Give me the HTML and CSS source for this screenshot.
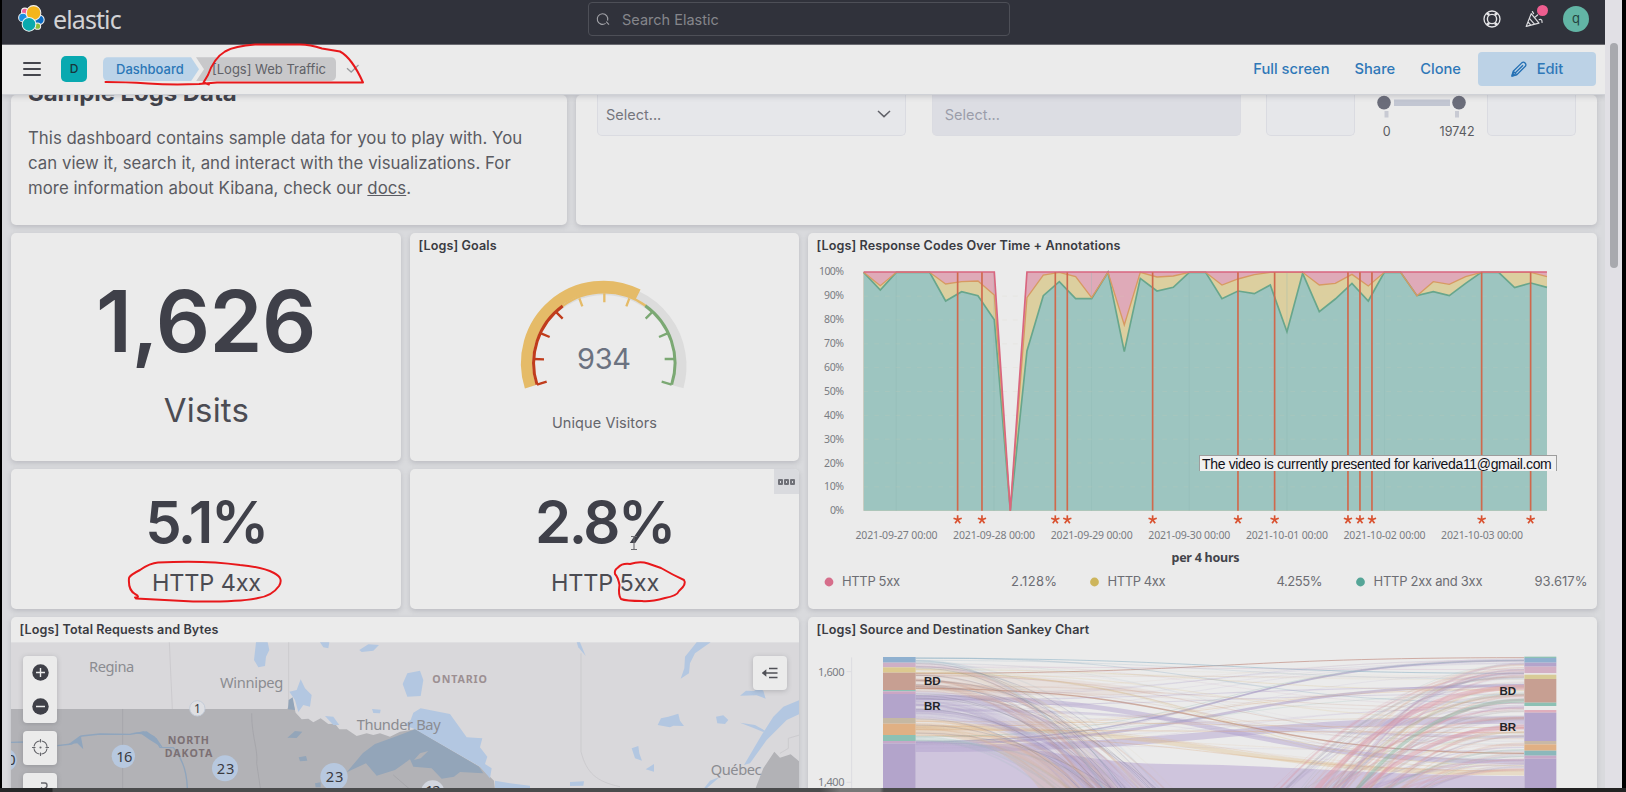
FILE: index.html
```html
<!DOCTYPE html>
<html lang="en">
<head>
<meta charset="utf-8">
<title>[Logs] Web Traffic - Elastic</title>
<link rel="stylesheet" href="styles.css">
</head>
<body>
<div class="window">
  <div class="app">
    <header class="topbar">
      <div class="brand">
        <svg class="logo" viewBox="0 0 26 26">
          <g stroke="#f3f3f3" stroke-width="1">
            <circle cx="6.6" cy="6.2" r="3.2" fill="#ee5f97"/>
            <circle cx="4.8" cy="12.2" r="4.2" fill="#1b8fe0"/>
            <circle cx="20.6" cy="14.2" r="4.6" fill="#0b6cc4"/>
            <circle cx="18.8" cy="20.4" r="3" fill="#8dbd3a"/>
            <circle cx="15" cy="7.6" r="7" fill="#f4b51c"/>
            <circle cx="10.6" cy="18.6" r="6.6" fill="#0aa9ae"/>
          </g>
        </svg>
        <span class="wordmark">elastic</span>
      </div>
      <div class="search">
        <svg viewBox="0 0 14 14"><path d="M9.6 11.4A5.3 5.3 0 1 1 11.6 8.6M10.2 9.6L13 12.6" fill="none" stroke="#a2a3a8" stroke-width="1.1"/></svg>
        <span>Search Elastic</span>
      </div>
      <div class="top-icons">
        <svg class="help" viewBox="0 0 18 18" fill="none" stroke="#e6e6e8">
          <circle cx="9" cy="9" r="8" stroke-width="1.3"/><circle cx="9" cy="9" r="4.6" stroke-width="1.4"/>
          <path d="M3.7 2.9L6.2 5M14.3 2.9L11.8 5M3.7 15.1L6.2 13M14.3 15.1L11.8 13" stroke-width="2.6"/>
        </svg>
        <span class="news">
          <svg viewBox="0 0 20 18" fill="none" stroke="#dddde0" stroke-width="1.2" stroke-linejoin="round" stroke-linecap="round">
            <path d="M6.2 3.6L1.2 16.4L14 13.2ZM4.4 8.4L9.4 14.2M3 12L5.8 15.1M7.4 1.6L8.6 3.6M9.4 7.6L12.6 5M14.2 9.6Q17.4 8.6 17 12.4"/>
          </svg>
          <i></i>
        </span>
        <span class="avatar">q</span>
      </div>
    </header>
    <nav class="navbar">
      <span class="menu"><i></i><i></i><i></i></span>
      <span class="space">D</span>
      <div class="crumbs"><span class="crumb first">Dashboard</span><span class="crumb last">[Logs] Web Traffic</span></div>
      <svg class="check" viewBox="0 0 14 10"><path d="M1 4.2L5.2 8L12.5 1" fill="none" stroke="#9a9a9d" stroke-width="1.3"/></svg>
      <div class="actions">
        <a>Full screen</a><a>Share</a><a>Clone</a>
        <span class="edit">
          <svg viewBox="0 0 16 16" fill="none" stroke="#2470b4" stroke-width="1.3" stroke-linejoin="round"><path d="M1 15L2.2 10.2L11 1.6Q12.6.6 14 2T14.6 5L5.8 13.8ZM4.2 12L12 4.2M2.2 10.2L5.8 13.8"/><path d="M1 15L1.7 12.2L3.8 14.2Z" fill="#2470b4"/></svg>
          Edit
        </span>
      </div>
    </nav>
    <main class="board">
      <section class="row intro">
        <article class="panel about">
          <h2>Sample Logs Data</h2>
          <p>This dashboard contains sample data for you to play with. You<br>can view it, search it, and interact with the visualizations. For<br>more information about Kibana, check our <u>docs</u>.</p>
        </article>
        <article class="panel controls">
          <div class="field select"><span>Select...</span><svg viewBox="0 0 14 8"><path d="M1 1L7 6.6L13 1" fill="none" stroke="#606168" stroke-width="1.5"/></svg></div>
          <div class="field disabled"><span>Select...</span></div>
          <div class="field number lo"></div>
          <svg class="range" viewBox="0 0 100 45">
            <rect x="18" y="4.5" width="56" height="6.5" fill="#c2c6d2"/>
            <path d="M10.5 16v6.5M81 16v6.5" stroke="#c8cad3" stroke-width="4"/>
            <circle cx="8" cy="7.6" r="6.8" fill="#6b6d7a"/><circle cx="83" cy="7.6" r="6.8" fill="#6b6d7a"/>
            <text x="6.8" y="40.5" textLength="7.6">0</text><text x="63.5" y="40.5" textLength="35">19742</text>
          </svg>
          <div class="field number"></div>
        </article>
      </section>
      <section class="row middle">
        <div class="metrics">
          <article class="panel metric big"><strong>1,626</strong><span>Visits</span></article>
          <article class="panel goals">
            <h3>[Logs] Goals</h3>
            <svg class="gauge" viewBox="410 233 389 228">
              <g transform="translate(400 225) scale(.33333)" fill="none">
                <path d="M391 485A230 230 0 1 1 834 485" stroke="#dcdcdc" stroke-width="34"/>
                <path d="M391 485A230 230 0 0 1 714 209" stroke="#e5bb68" stroke-width="34"/>
                <path d="M485 245A212 212 0 0 1 738 243" stroke="#e5bb68" stroke-width="7"/>
                <path d="M538 220l9 24M613 205v27M688 220l-9 24" stroke="#e5bb68" stroke-width="7"/>
                <path d="M411 479A212 212 0 0 1 488 243" stroke="#c03c1c" stroke-width="9"/>
                <path d="M411 479l29-9M401 402l31 1M423 325l26 11M467 260l21 21" stroke="#c03c1c" stroke-width="7"/>
                <path d="M736 242A212 212 0 0 1 815 479" stroke="#7ba873" stroke-width="9"/>
                <path d="M815 479l-30-9M824 402h-30M802 325l-25 11M758 260l-21 21" stroke="#7ba873" stroke-width="7"/>
              </g>
              <text class="gauge-value" x="577" y="368.5" textLength="54">934</text>
              <text class="gauge-label" x="552" y="428" textLength="105">Unique Visitors</text>
            </svg>
          </article>
          <article class="panel metric"><strong>5.1%</strong><span>HTTP 4xx</span></article>
          <article class="panel metric"><strong>2.8%</strong><span>HTTP 5xx</span><em class="options"><i></i><i></i><i></i></em></article>
        </div>
        <article class="panel codes">
          <h3>[Logs] Response Codes Over Time + Annotations</h3>
          <svg class="fill" viewBox="808 233 789 375.5" id="codes"></svg>
        </article>
      </section>
      <section class="row bottom">
        <article class="panel map">
          <h3>[Logs] Total Requests and Bytes</h3>
          <svg class="fill" viewBox="11 617 788 171" preserveAspectRatio="xMidYMin slice">
            <g transform="translate(0 610) scale(.33333)">
              <rect x="33" y="97" width="2366" height="450" fill="#d9d8db"/>
              <path d="M508 97L517 297M866 97V297M1743 130V425C1760 490 1790 515 1860 530M2340 430L2365 415V385L2399 375" fill="none" stroke="#c9c8cb" stroke-width="2.5"/>
              <path d="M33 297H862L876 265L887 308L905 328L925 326L940 337L962 325L985 342L1005 341L1018 358L1040 358L1070 378L1100 370L1120 375L1140 370L1170 380L1200 365L1245 358L1440 470L1482 512L1486 547H33Z" fill="#b2b2b6"/>
              <path d="M2262 547L2290 475L2323 425L2340 443L2372 433L2399 455V547Z" fill="#b2b2b6"/>
              <path d="M368 297V547M755 310C755 380 775 420 770 460L783 547M1180 495L1240 547" fill="none" stroke="#a3a4a8" stroke-width="2.5"/>
              <g fill="#b3c7e1">
                <path d="M768 97H803L808 120L798 140L795 168L775 172L762 150Z"/>
                <path d="M960 97H988L985 115L970 112Z"/><path d="M1078 120L1105 103L1137 105L1120 122L1085 126Z"/>
                <path d="M868 245L890 240L902 208L915 235L935 255L930 290L910 285L895 306L885 270Z"/>
                <path d="M1208 222L1222 190L1260 182L1270 210L1262 258L1222 260Z"/>
                <path d="M1116 297L1142 299L1140 310L1120 309Z"/>
                <path d="M975 318L1000 320L1018 345L1000 345Z"/>
                <path d="M1213 345L1232 330L1240 308L1262 295L1300 302L1350 312L1370 340L1400 382L1447 385L1440 412L1462 440L1455 462L1475 475L1470 505L1440 470L1245 358Z"/>
                <path d="M1485 512L1530 520L1590 527V535H1485Z"/><path d="M1710 516L1752 514L1750 527L1710 528Z"/>
                <path d="M1730 97H1740L1757 138L1735 112Z"/>
                <path d="M2090 97H2132L2085 130L2070 160L2067 190L2042 206L2053 175L2055 140Z"/>
                <path d="M2220 257L2238 242L2262 243L2276 233L2290 242L2297 266L2270 256Z"/>
                <path d="M1973 345L1983 325L2005 320L2035 311L2040 332L2052 348L2020 347L2010 352Z"/>
                <path d="M2148 320L2170 316L2185 330L2175 342L2152 340Z"/>
                <path d="M1895 415L1915 408L1918 430L1926 452L1905 445Z"/><path d="M1937 478L1962 462V485Z"/>
                <path d="M2232 465L2285 375L2320 320L2350 290L2399 270V312L2360 330L2300 390L2250 460Z"/>
                <path d="M2220 338L2265 345L2295 362L2290 366L2255 352ZM2130 512L2160 500L2120 535H2112Z"/>
              </g>
              <g fill="#93a5b9">
                <path d="M1040 487L1088 430L1125 402L1185 380L1245 358L1437 470L1450 490L1380 486L1362 500L1325 506L1295 475L1240 470L1230 448L1185 480L1130 497L1098 460Z"/>
                <path d="M862 383L885 363L907 365L890 384ZM896 442L918 438L922 452L900 454ZM866 270L878 262L885 300L864 298ZM945 520L962 517V532H947Z"/>
              </g>
              <path d="M33 397L80 396M172 407L215 402L245 378L300 372L390 373L430 366L462 380L480 412L520 413Q560 460 562 535" fill="none" stroke="#8fa5bd" stroke-width="4"/>
              <path d="M205 403L242 376L250 418L232 400ZM390 370L440 364L470 385L490 415L450 390L425 373Z" fill="#8fa5bd"/>
              <path d="M1242 450L1260 430L1285 423L1262 445Z" fill="#b2b2b6"/>
              <g fill="#b7c8df">
                <circle cx="370" cy="439" r="35"/><circle cx="675" cy="475" r="39"/><circle cx="1002" cy="500" r="41"/><circle cx="592" cy="295" r="23" fill="#dedfe3" stroke="#c4ccd8" stroke-width="3"/><circle cx="1298" cy="546" r="35" fill="#d2d6df"/><path d="M33 420A35 35 0 0 1 33 480Z"/>
              </g>
              <g class="map-num">
                <text x="349" y="456" textLength="48">16</text><text x="650" y="491" textLength="53">23</text><text x="977" y="516" textLength="53">23</text><text x="582" y="308" font-size="36">1</text><text x="1276" y="557" textLength="46">12</text><text x="22" y="466">0</text>
              </g>
              <g class="map-city">
                <text x="267" y="185" textLength="136">Regina</text><text x="660" y="234" textLength="190">Winnipeg</text><text x="1070" y="361" textLength="252">Thunder Bay</text><text x="2132" y="494" textLength="153">Québec</text>
              </g>
              <g class="map-state">
                <text x="503" y="402" textLength="124">NORTH</text><text x="494" y="440" textLength="143">DAKOTA</text><text x="1297" y="219" textLength="164" fill="#9c8f92">ONTARIO</text>
              </g>
            </g>
          </svg>
          <div class="map-tools">
            <div class="zoom">
              <svg viewBox="0 0 17 17"><circle cx="8.5" cy="8.5" r="8.2" fill="#3f4048"/><path d="M4 8.5h9M8.5 4v9" stroke="#ececec" stroke-width="1.4"/></svg>
              <svg viewBox="0 0 17 17"><circle cx="8.5" cy="8.5" r="8.2" fill="#3f4048"/><path d="M4 8.5h9" stroke="#ececec" stroke-width="1.4"/></svg>
            </div>
            <div class="tool"><svg viewBox="0 0 17 17" fill="none" stroke="#66676c" stroke-width="1.1"><circle cx="8.5" cy="8.5" r="6.6" stroke-dasharray="8.4 2" stroke-dashoffset="-1"/><path d="M8.5 0v3.5M8.5 13.5v3.5M0 8.5h3.5M13.5 8.5h3.5"/><circle cx="8.5" cy="8.5" r=".5" fill="#66676c"/></svg></div>
            <div class="tool"><svg viewBox="0 0 17 17" fill="none" stroke="#66676c" stroke-width="1.4"><path d="M9 2h4q2 0 2 2.5T12.5 7.5M10 6.5L4 12.5V16"/></svg></div>
          </div>
          <div class="legend-toggle"><svg viewBox="0 0 16 12" stroke="#505157" stroke-width="1.5"><path d="M7 1.5h8.5M2 6h13.5M7 10.5h8.5"/><path d="M.8 6L3.6 3.8V8.2Z" fill="#505157"/></svg></div>
        </article>
        <article class="panel sankey">
          <h3>[Logs] Source and Destination Sankey Chart</h3>
          <svg class="fill" viewBox="808 617 789 171" preserveAspectRatio="xMidYMin slice" id="sankey"></svg>
        </article>
      </section>
    </main>
  </div>
  <div class="scroll"><i></i></div>
</div>
<div class="taskbar"></div>
<div class="notice">The video is currently presented for kariveda11@gmail.com</div>
<svg class="ink" viewBox="0 0 1626 792">
  <path d="M105.5 82Q125 82 148 83.5T199 84L217 82.5H363Q352 58 340 51.5L322 48.5Q310 44.8 300 44.6H255Q235 46 225 51.5Q214 58 208 75L203.5 82.5L209 84.5"/>
  <path d="M135 597.5Q141 597 135 594Q128 590 129 578Q130 575 140 570Q150 563 158 562.5Q205 560 240 565Q262 567 274 573Q284 578 279 586Q272 596 258 598Q240 602 193 601.5L136 598.5"/>
  <path d="M618 567.5Q622 563 630 564Q640 561 648 563.5L661 568Q673 575 684 580Q687 584 679 591Q677 596 665 598Q650 602 642 601Q626 601 621 599Q618 595 619.5 585Q618 577 615 574Q614 570 618 567.5"/>
</svg>
<svg class="cursor" viewBox="0 0 8 16"><path d="M1 1.5h2.3q.7 0 .7 1q0-1 .7-1H7M4 2v12M1 14.5h2.3q.7 0 .7-1q0 1 .7 1H7" fill="none" stroke="#6b6b70" stroke-width="1.1"/></svg>
<script src="charts.js"></script>
</body>
</html>
```
FILE: styles.css
```css
* { box-sizing: border-box; }
body { margin: 0; width: 1626px; height: 792px; overflow: hidden; background: #000; font-family: Inter, "Open Sans", sans-serif; color: #404149; position: relative; }
svg { display: block; flex: none; }
h2, h3, p { margin: 0; }
.window { display: flex; height: 788px; padding-left: 2px; }
.app { width: 1603px; display: flex; flex-direction: column; background: #d9dadd; overflow: hidden; }
.scroll { width: 17px; background: #e1e0e5; padding: 43px 4px 0 5px; }
.scroll i { display: block; height: 225px; border-radius: 4px; background: #a8a9ae; }
.taskbar { height: 4px; background: linear-gradient(90deg, #262728 0 52px, #4a4b4c 53px 820px, #777 840px 880px, #4a4b4c 884px 1400px, #222 1560px); }

.topbar { height: 45px; flex: none; background: #30323b; display: flex; align-items: flex-start; border-bottom: 1px solid #6b6c72; }
.brand { display: flex; width: 586px; padding: 5px 0 0 16px; gap: 8px; }
.logo { width: 27px; height: 27px; }
.wordmark { font: 25px/25px "Noto Sans", sans-serif; letter-spacing: -.9px; color: #d2d2d5; margin-top: 2px; }
.search { width: 422px; height: 34px; margin-top: 2px; border: 1.5px solid #4d4f57; border-radius: 4px; display: flex; align-items: center; gap: 12px; padding-left: 7px; font-size: 14.5px; color: #85868b; }
.search svg { width: 14px; height: 14px; }
.top-icons { margin-left: auto; display: flex; align-items: center; padding: 6px 16px 0 0; }
.help { width: 18px; height: 18px; margin-right: 24px; }
.news { position: relative; width: 20px; margin-right: 18px; }
.news svg { width: 20px; height: 18px; }
.news i { position: absolute; right: -3px; top: -5px; width: 11px; height: 11px; border-radius: 50%; background: #ee5e90; }
.avatar { width: 26px; height: 26px; border-radius: 50%; background: #62b5a5; color: #24443f; font-size: 13px; line-height: 25px; text-align: center; }

.navbar { height: 49.500px; flex: none; background: #ebebeb; display: flex; align-items: center; border-bottom: 1px solid #cfd1d6; padding: 0 9px 0 21px; position: relative; z-index: 2; box-shadow: 0 2px 5px rgba(70, 75, 90, .2); }
.menu { width: 18px; display: grid; gap: 4px; margin-right: 20px; }
.menu i { height: 2px; background: #45464d; border-radius: 1px; }
.space { width: 26px; height: 26px; border-radius: 5px; background: #09a9b0; color: #17363c; font-size: 12px; font-weight: 500; line-height: 26px; text-align: center; margin-right: 16px; }
.crumbs { display: flex; font-size: 13px; line-height: 25px; height: 24px; }
.crumb.first { width: 96px; padding-left: 13px; background: #bbd3e8; color: #2a77b7; font-weight: 500; border-radius: 5px 0 0 5px; clip-path: polygon(0 0, 88px 0, 96px 50%, 88px 100%, 0 100%); }
.crumb.last { width: 140px; margin-left: -3px; padding-left: 16px; background: #c8c8ca; color: #606167; border-radius: 0 5px 5px 0; clip-path: polygon(0 0, 100% 0, 100% 100%, 0 100%, 8px 50%); white-space: nowrap; }
.check { width: 14px; height: 10px; margin-left: 10px; }
.actions { margin-left: auto; display: flex; align-items: center; gap: 25px; color: #2f78b8; font-size: 14.7px; font-weight: 500; }
.edit { width: 118px; height: 34px; margin-left: -8px; border-radius: 4px; background: #bcd2e6; display: flex; align-items: center; justify-content: center; gap: 10px; }
.edit svg { width: 16px; height: 16px; }

.board { flex: 1; display: flex; flex-direction: column; gap: 8.5px; padding: 0 8px 0 9px; }
.row { display: flex; gap: 9px; }
.panel { background: #ebebeb; border-radius: 5px; box-shadow: 0 2px 5px rgba(80, 84, 96, .22); position: relative; overflow: hidden; }
.panel h3 { font-size: 12.6px; line-height: 16px; font-weight: 600; padding: 5px 0 0 8.5px; color: #3a3b42; white-space: nowrap; letter-spacing: .1px; }
.fill { position: absolute; inset: 0; width: 100%; height: 100%; }

.intro { height: 130px; }
.about { width: 556px; padding-left: 17px; }
.about h2 { font-size: 24px; line-height: 30px; margin-top: -17px; font-weight: 700; letter-spacing: -.08px; }
.about p { margin-top: 18.5px; font-size: 16.8px; line-height: 25.2px; color: #5a5b62; white-space: nowrap; letter-spacing: .03px; }
.controls { flex: 1; display: flex; align-items: flex-start; padding: 0 21px; }
.field { height: 41px; border: 1px solid #dadbe1; border-top: 0; border-radius: 0 0 5px 5px; background: #e6e7ea; font-size: 14.5px; color: #75767d; display: flex; align-items: center; justify-content: space-between; padding: 0 14px 1px 8px; }
.select { width: 310px; margin-right: 25.5px; }
.field svg { width: 14px; height: 8px; }
.disabled { width: 310px; margin-right: 25.5px; background: #dcdde3; color: #9b9daa; padding-left: 12px; }
.number { width: 89px; }
.number.lo { margin-right: 21px; }
.range { width: 100px; height: 45px; margin-right: 11px; }
.range text { font-size: 12.5px; fill: #5a5b61; }

.middle { height: 375.5px; }
.metrics { width: 788px; display: grid; grid-template: 228px 139.5px / 390px 389px; gap: 8px 9px; }
.metric { display: flex; flex-direction: column; align-items: center; }
.metric strong { font-size: 58px; line-height: 70px; font-weight: 600; margin-top: 18px; color: #3f4049; letter-spacing: -2.4px; }
.metric span { font-size: 23.5px; line-height: 30px; margin-top: 11px; color: #4b4c53; letter-spacing: -.15px; padding-left: 1px; }
.metric.big strong { font-size: 85px; line-height: 100px; margin-top: 39px; letter-spacing: -.5px; }
.metric.big span { font-size: 33px; line-height: 40px; margin-top: 18px; letter-spacing: .2px; }
.options { position: absolute; right: 0; top: 0; width: 25px; height: 25px; background: #d9dade; display: flex; gap: 1px; align-items: center; justify-content: center; }
.options i { width: 5px; height: 6px; border: 2px solid #707178; border-radius: 1px; }
.gauge { position: absolute; inset: 0; width: 389px; height: 228px; }
.gauge-value { font-size: 29px; fill: #6b7280; }
.gauge-label { font-size: 14.5px; fill: #65666c; }
.codes { flex: 1; }
.axis { font: 10.5px "Noto Sans", sans-serif; fill: #7a7c82; }
.key { font: 13px Inter, sans-serif; fill: #6d6e74; }
.unit { font: 700 12.5px "Noto Sans", sans-serif; fill: #43444a; }

.bottom { flex: 1; }
.bottom .panel { border-radius: 5px 5px 0 0; }
.map { width: 788px; }
.sankey { flex: 1; }
.map-num { font-family: "Noto Sans", sans-serif; font-size: 44px; fill: #3a3b41; }
.map-city { font-family: "Noto Sans", sans-serif; font-size: 44px; fill: #8b8c91; }
.map-state { font-family: "Noto Sans", sans-serif; font-size: 32px; font-weight: 700; fill: #7c7074; }
.map-tools { position: absolute; left: 12px; top: 38.5px; display: grid; gap: 8px; }
.zoom, .tool, .legend-toggle { width: 34px; background: #ebebeb; border-radius: 4px; box-shadow: 0 1px 5px rgba(60, 62, 70, .25); display: flex; flex-direction: column; align-items: center; justify-content: center; }
.zoom { height: 67px; gap: 17px; }
.tool { height: 34px; }
.zoom svg, .tool svg { width: 17px; height: 17px; }
.legend-toggle { position: absolute; right: 12px; top: 38.5px; height: 34px; }
.legend-toggle svg { width: 16px; height: 12px; }
.node-label { font: 700 11.5px "Liberation Sans", sans-serif; fill: #222327; }
.sankey .axis { font-family: "Noto Sans", sans-serif; font-size: 11px; }

.notice { position: absolute; z-index: 3; left: 1199px; top: 455px; width: 358px; height: 16px; background: #f0f0f0; border: solid #9d9d9d; border-width: 1px 1px 0; color: #101018; font: 14px/17px "Liberation Sans", sans-serif; letter-spacing: -.34px; padding-left: 2px; white-space: nowrap; }
.ink { position: absolute; z-index: 4; inset: 0; width: 1626px; height: 792px; fill: none; stroke: #e8181b; stroke-width: 2; stroke-linejoin: round; stroke-linecap: round; }
.cursor { position: absolute; z-index: 4; left: 630px; top: 535px; width: 8px; height: 16px; }
```
FILE: charts.js
```js
// Points are in thirds of a pixel; each group scales them down.
const green = '190,142 240,195 288,142 388,142 436,228 484,200 533,212 582,284 630,857 680,378 729,212 777,170 826,221 874,221 923,142 972,380 1020,160 1070,198 1119,187 1167,142 1216,142 1265,221 1313,198 1362,206 1410,180 1460,320 1507,145 1557,260 1605,222 1655,175 1704,228 1752,142 1801,142 1850,212 1899,200 1947,212 1996,175 2043,142 2095,142 2143,188 2192,174 2240,187';
const yellow = '190,142 240,182 288,142 388,142 436,177 484,170 533,168 582,210 630,857 680,218 729,150 777,142 826,155 874,218 923,142 972,300 1020,142 1070,156 1119,153 1167,142 1216,142 1265,180 1313,162 1362,149 1410,142 1460,142 1507,142 1557,180 1605,175 1655,148 1704,183 1752,142 1801,142 1850,212 1899,170 1947,178 1996,155 2043,142 2095,142 2192,142 2240,155';
const pink = '190,141 582,141 630,857 680,141 2240,141';
const area = (pts, fill) => `<polygon points="190,857 ${pts} 2240,857" fill="${fill}"/>`;
const line = (pts, c, w) => `<polyline points="${pts}" fill="none" stroke="${c}" stroke-width="${w}"/>`;

let s = '<g transform="translate(800.3 225) scale(.33333)">';
s += area(pink, '#dfaab8') + area(yellow, '#dccf9f') + area(green, '#9dc5c0');
for (let i = 0; i < 7; i++) s += `<path d="M${288 + i * 293} 142V857" stroke="#8fb9b4" stroke-width="2" opacity=".5"/>`;
for (let i = 1; i < 10; i++) s += `<path d="M190 ${142 + i * 71.5}H2240" stroke="#d8d0b8" stroke-width="2" stroke-dasharray="14 18" opacity=".25"/>`;
s += line(green, '#68a68c', 5) + line(yellow, '#d79a62', 4) + line(pink, '#d9667f', 5);
for (const x of [472, 545, 765, 801, 1057, 1313, 1423, 1643, 1679, 1715, 2044, 2191]) {
  s += `<path d="M${x} 142V857" stroke="#d0694c" stroke-width="5"/>`;
  for (let a = 0; a < 5; a++) s += `<path d="M${x} 884V871" transform="rotate(${a * 72} ${x} 884)" stroke="#d9512f" stroke-width="5"/>`;
}
s += '</g>';
for (let i = 0; i <= 10; i++) {
  const w = i === 0 ? 14 : i === 10 ? 25 : 20;
  s += `<text class="axis" x="${844 - w}" y="${514.3 - i * 23.9}" textLength="${w}">${i * 10}%</text>`;
}
['09-27', '09-28', '09-29', '09-30', '10-01', '10-02', '10-03'].forEach((d, i) => {
  s += `<text class="axis" x="${855.5 + i * 97.6}" y="539.4" textLength="82">2021-${d} 00:00</text>`;
});
s += '<text class="unit" x="1171.5" y="562" textLength="68">per 4 hours</text>';
for (const [cx, c, x, w, t, vx, vw, v] of [
  [829, '#d66e8b', 842, 58, 'HTTP 5xx', 1011, 46, '2.128%'],
  [1094.5, '#cdb55c', 1107.5, 58, 'HTTP 4xx', 1276.5, 46, '4.255%'],
  [1360.5, '#55a597', 1373.5, 109, 'HTTP 2xx and 3xx', 1534.5, 53, '93.617%']]) {
  s += `<circle cx="${cx}" cy="582" r="4.4" fill="${c}"/><text class="key" x="${x}" y="586.2" textLength="${w}">${t}</text><text class="key" x="${vx}" y="586.2" textLength="${vw}">${v}</text>`;
}
document.getElementById('codes').innerHTML = s;

// Sankey chart
let seed = 41;
const rnd = () => (seed = (seed * 16807) % 2147483647) / 2147483647;
const between = (a, b) => a + (b - a) * rnd();
const flow = (a, b, c, w, o) => `<path d="M347 ${a}C1260 ${a} 1260 ${b} 2172 ${b}" fill="none" stroke="${c}" stroke-width="${w}" opacity="${o}"/>`;
const tone = y => y < 160 ? '#86a9be' : y < 172 ? '#c79ab8' : y < 190 ? '#d8bf86' : y < 245 ? '#c79482' : y < 325 ? '#a595c4' : y < 378 ? '#dcaa7b' : y < 393 ? '#83b8ad' : '#b9a9cf';
let k = '<g transform="translate(800 610) scale(.33333)">';
k += '<path d="M347 396C700 396 850 460 1100 462C1500 466 1700 496 2172 498V560H347Z" fill="#c8bcd9" opacity=".8"/>';
k += '<path d="M347 190C650 190 900 210 1100 250L800 260L347 238Z" fill="#dcb9ac" opacity=".22"/><path d="M347 254C600 254 850 330 1000 540H800C700 400 600 330 347 322Z" fill="#b9abd0" opacity=".28"/><path d="M347 341C550 341 700 380 850 540H720C650 440 550 378 347 375Z" fill="#e0b58c" opacity=".25"/>';
k += flow(262, 455, '#b3a4cf', 15, .5) + flow(415, 330, '#b3a4cf', 22, .5) + flow(300, 380, '#b3a4cf', 8, .3) + flow(352, 490, '#e0c291', 13, .4) + flow(400, 226, '#a99ac8', 8, .5) + flow(395, 152, '#9992bd', 5, .55) + flow(235, 430, '#b9806c', 4, .6) + flow(190, 143, '#c79a90', 3, .8) + flow(145, 190, '#92b5c8', 3, .6);
for (let i = 0; i < 44; i++) {
  const a = between(143, 420);
  k += flow(a, between(143, 490), tone(a), between(1, 3.5), between(.12, .34));
}
for (let i = 0; i < 80; i++) {
  const a = between(150, 395);
  k += flow(a, between(1150, 2500), tone(a), between(2, 9), between(.07, .2));
}
for (let i = 0; i < 14; i++) k += flow(between(145, 380), between(1100, 2200), '#7f7f92', 2.2, .34);
const warm = ['#d893a0', '#d893a0', '#b896c0', '#d9a993', '#8fb3a5', '#a99ac8', '#ddc08f', '#96939c'];
for (let i = 0; i < 95; i++) {
  k += flow(between(1050, 2800), between(160, 480), warm[Math.floor(rnd() * warm.length)], between(1.5, 8), between(.1, .28));
}
k += flow(1650, 232, '#dd96a5', 15, .45) + flow(1900, 350, '#dd96a5', 13, .45) + flow(2300, 272, '#8ab5a2', 11, .45);
const bar = (x, w, list) => list.map(([a, b, c]) => `<rect x="${x}" y="${a}" width="${w}" height="${b - a}" fill="${c}"/>`).join('');
k += bar(249, 98, [[141, 158, '#8fb0cf'], [158, 172, '#ceafc6'], [172, 188, '#dcc98f'], [188, 240, '#c79f92'], [240, 244, '#8cc1b4'], [244, 252, '#cba6c4'], [252, 324, '#b3a4cb'], [324, 341, '#c5b8a3'], [341, 375, '#e0b084'], [375, 393, '#8cc1b4'], [393, 400, '#c6a9c8'], [400, 540, '#b3a4cb']]);
k += bar(2173, 96, [[140, 144, '#8cc1b4'], [144, 158, '#8fb0cf'], [158, 170, '#b3a4cb'], [170, 190, '#d3b0c4'], [190, 194, '#ebebeb'], [194, 207, '#d8cb97'], [207, 278, '#c79f92'], [278, 288, '#8cc1b4'], [288, 300, '#ebebeb'], [300, 308, '#dfaebc'], [308, 393, '#b3a4cb'], [393, 403, '#c8b8a6'], [403, 422, '#e0b084'], [422, 437, '#8bb8bb'], [437, 446, '#c6a9c8'], [446, 540, '#b3a4cb']]);
k += '<path d="M155 142V540M140 185H155M140 517H155" stroke="#dcdce0" stroke-width="3" fill="none"/></g>';
k += '<text class="axis" x="818" y="675.5" textLength="26.5">1,600</text><text class="axis" x="818" y="785.5" textLength="26.5">1,400</text>';
for (const [x, y, t] of [[924, 684.5, 'BD'], [924, 709.5, 'BR'], [1499.5, 694.5, 'BD'], [1499.5, 730.5, 'BR']]) k += `<text class="node-label" x="${x}" y="${y}" textLength="16.5">${t}</text>`;
document.getElementById('sankey').innerHTML = k;
```
